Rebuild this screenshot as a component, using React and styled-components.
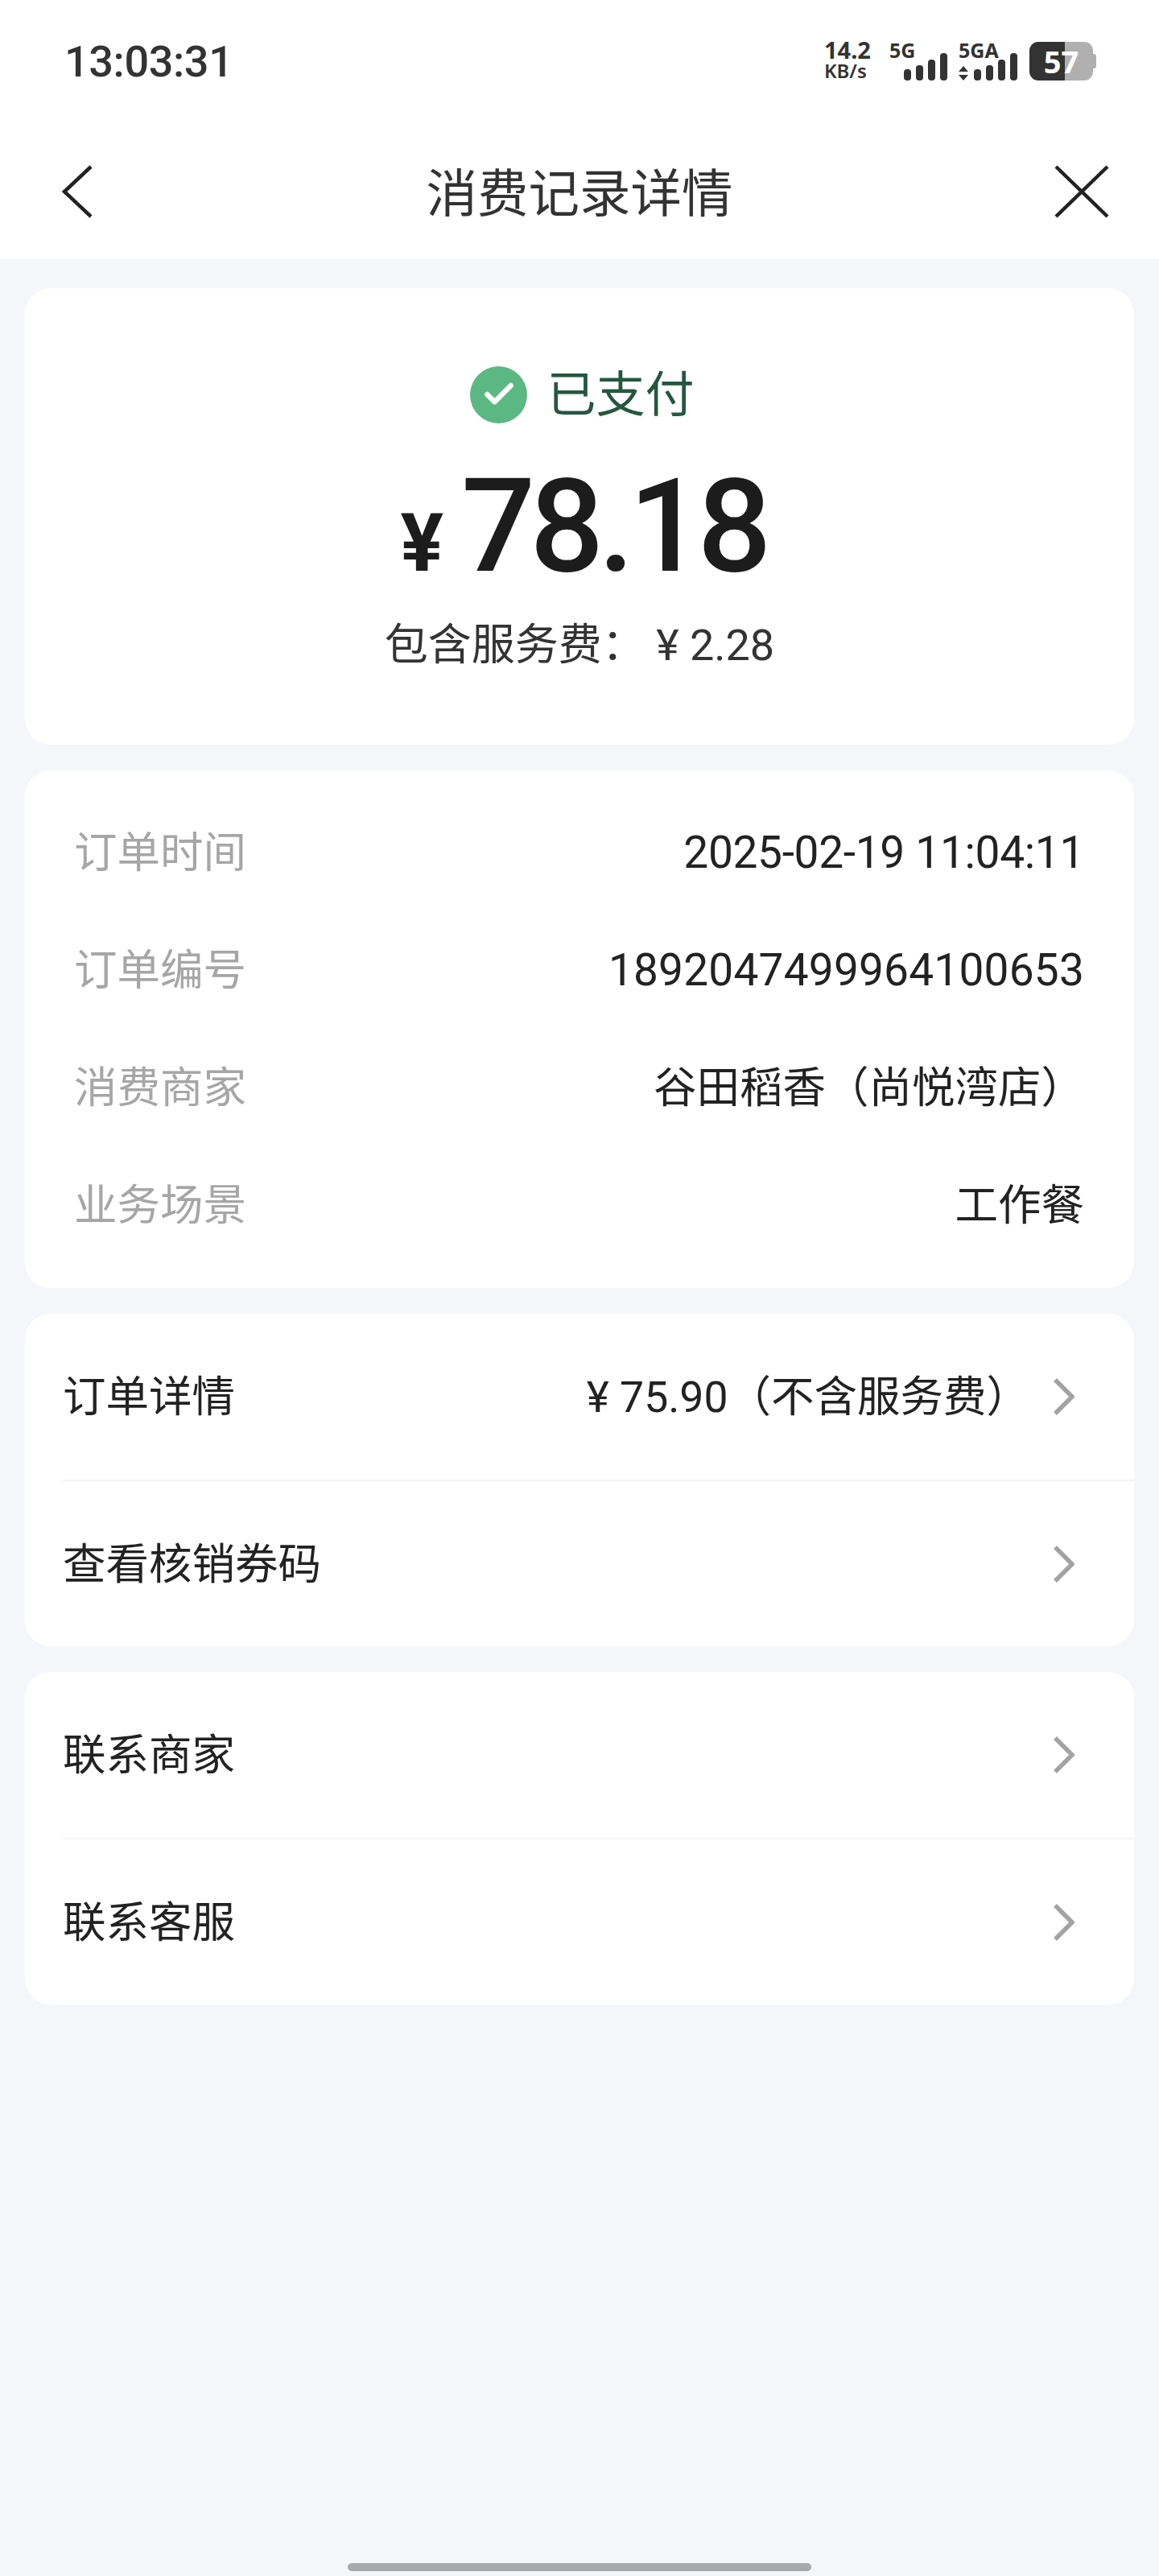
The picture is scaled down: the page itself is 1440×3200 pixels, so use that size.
import React from 'react';
import styled, { createGlobalStyle } from 'styled-components';
import { Check } from 'lucide-react';

const GlobalStyle = createGlobalStyle`
  html, body {
    margin: 0;
    padding: 0;
    background: #f4f6fa;
  }
  body {
    font-family: Roboto, "Noto Sans CJK SC", sans-serif;
  }
`;

const Page = styled.div`
  width: 1440px;
  min-height: 3200px;
  display: flex;
  flex-direction: column;
  background: #f4f6fa;
`;

const Top = styled.div`
  background: #fff;
  height: 322px;
`;

const StatusBar = styled.div`
  height: 154px;
  box-sizing: border-box;
  padding: 0 82px 0 80px;
  display: flex;
  align-items: center;
  justify-content: space-between;
  color: #333;
`;

const Clock = styled.div`
  font-size: 54px;
  font-weight: 500;
  letter-spacing: -0.4px;
  margin-top: -2px;
`;

const Indicators = styled.div`
  display: flex;
  align-items: flex-end;
  height: 48px;
  margin-top: -2px;
`;

const Speed = styled.div`
  width: 81px;
  display: flex;
  flex-direction: column;
  font-family: "Noto Sans", sans-serif;
  font-weight: 700;
`;

const SpeedValue = styled.span`
  font-size: 29px;
  line-height: 28px;
`;

const SpeedUnit = styled.span`
  font-size: 24px;
  line-height: 24px;
  font-weight: 600;
`;

const Signal = styled.div`
  position: relative;
  width: ${p => p.$w}px;
  height: 48px;
  display: flex;
  justify-content: flex-end;
  align-items: flex-end;
`;

const SignalTag = styled.span`
  position: absolute;
  left: ${p => p.$left}px;
  top: -4px;
  font-family: "Noto Sans", sans-serif;
  font-weight: 700;
  font-size: 25px;
  line-height: 28px;
`;

const Battery = styled.div`
  position: relative;
  margin-left: 15px;
  width: 79px;
  height: 48px;
  border-radius: 11px;
  background: linear-gradient(to right, #333 44px, #b0b0b0 44px);
  color: #fff;
  font-family: "Noto Sans", sans-serif;
  font-size: 38px;
  font-weight: 700;
  line-height: 48px;
  text-align: center;
  &::after {
    content: '';
    position: absolute;
    right: -4px;
    top: 15px;
    width: 4px;
    height: 18px;
    border-radius: 0 3px 3px 0;
    background: #b0b0b0;
  }
`;

const NavBar = styled.div`
  height: 168px;
  box-sizing: border-box;
  padding: 0 62px;
  display: grid;
  grid-template-columns: 1fr auto 1fr;
  align-items: center;
`;

const NavSide = styled.div`
  display: flex;
  justify-content: ${p => (p.$end ? 'flex-end' : 'flex-start')};
  padding-left: ${p => (p.$end ? 0 : 14)}px;
`;

const NavTitle = styled.div`
  font-size: 63.5px;
  color: #333;
  line-height: 80px;
  margin-top: 7px;
`;

const Main = styled.main`
  padding: 36px 31px 0;
  display: flex;
  flex-direction: column;
  gap: 32px;
`;

const Card = styled.section`
  background: #fff;
  border-radius: 32px;
  overflow: hidden;
`;

const SummaryCard = styled(Card)`
  height: 567px;
  box-sizing: border-box;
  padding: 96px 0 0 5px;
  display: flex;
  flex-direction: column;
  align-items: center;
`;

const StatusLine = styled.div`
  display: flex;
  align-items: center;
  gap: 24px;
  height: 72px;
  font-size: 61px;
  color: #24573f;
  margin-left: 2px;
`;

const StatusText = styled.span`
  padding-bottom: 9px;
`;

const StatusDot = styled.span`
  width: 71px;
  height: 71px;
  border-radius: 50%;
  background: #5cb882;
  color: #fff;
  display: flex;
  align-items: center;
  justify-content: center;
`;

const Amount = styled.div`
  margin: 38px 0 0 4px;
  height: 180px;
  display: flex;
  align-items: baseline;
  justify-content: center;
  gap: 22px;
  color: #1c1c1c;
  line-height: 180px;
  font-size: 162px;
  font-weight: 500;
  letter-spacing: -7px;
`;

const Currency = styled.span`
  font-size: 100px;
  font-weight: 700;
  letter-spacing: 0;
`;

const Fee = styled.div`
  margin: 28px 0 0 -5px;
  font-size: 54px;
  line-height: 60px;
  color: #333;
`;

const InfoCard = styled(Card)`
  height: 643px;
  box-sizing: border-box;
  padding: 28px 62px 31px 61px;
`;

const InfoRow = styled.div`
  height: 146px;
  display: flex;
  align-items: center;
  justify-content: space-between;
  font-size: 53.5px;
`;

const InfoLabel = styled.span`
  color: #a6a6a6;
  padding-bottom: 7px;
`;

const InfoValue = styled.span`
  color: #222;
  padding-bottom: 7px;
`;

const InfoNumber = styled.span`
  color: #222;
  font-size: 55px;
  letter-spacing: ${p => p.$spacing}px;
  padding-top: 2px;
`;

const LinkRow = styled.div`
  height: 206px;
  margin-left: 47px;
  box-sizing: border-box;
  padding-right: 74px;
  display: flex;
  align-items: center;
  justify-content: space-between;
  font-size: 53.5px;
  color: #222;
  & + & {
    height: 207px;
    border-top: 2px solid #f5f5f7;
  }
`;

const LinkText = styled.span`
  padding-bottom: 9px;
`;

const LinkEnd = styled.div`
  display: flex;
  align-items: center;
  gap: 30px;
`;

const HomeBar = styled.div`
  margin: auto auto 6px;
  width: 576px;
  height: 10px;
  border-radius: 5px;
  background: #a9a9ab;
`;

const Bars = () => (
  <svg width="54" height="34" viewBox="0 0 54 34" fill="#333">
    <rect x="0" y="20" width="9" height="14" rx="4" />
    <rect x="15" y="15" width="9" height="19" rx="4" />
    <rect x="30" y="8" width="9" height="26" rx="4" />
    <rect x="45" y="0" width="9" height="34" rx="4" />
  </svg>
);

const Updown = () => (
  <svg width="14" height="18" viewBox="0 0 14 18" fill="#333" style={{ marginRight: 6 }}>
    <path d="M7 0 L13 7 H1 Z M1 11 H13 L7 18 Z" />
  </svg>
);

const Back = () => (
  <svg width="40" height="66" viewBox="0 0 40 66" fill="none" stroke="#222" strokeWidth="4.5">
    <path d="M37 2 L4 33 L37 64" />
  </svg>
);

const Close = () => (
  <svg width="68" height="66" viewBox="0 0 68 66" fill="none" stroke="#222" strokeWidth="4.5">
    <path d="M2 2 L66 64 M66 2 L2 64" />
  </svg>
);

const Chevron = () => (
  <svg width="26" height="46" viewBox="0 0 26 46" fill="none" stroke="#a3a3a3" strokeWidth="5.5">
    <path d="M2 2 L23 23 L2 44" />
  </svg>
);

const App = () => (
  <Page>
    <GlobalStyle />
    <Top>
      <StatusBar>
        <Clock>13:03:31</Clock>
        <Indicators>
          <Speed>
            <SpeedValue>14.2</SpeedValue>
            <SpeedUnit>KB/s</SpeedUnit>
          </Speed>
          <Signal $w={72}>
            <SignalTag $left={0}>5G</SignalTag>
            <Bars />
          </Signal>
          <Signal $w={87}>
            <SignalTag $left={14}>5GA</SignalTag>
            <Updown />
            <Bars />
          </Signal>
          <Battery>57</Battery>
        </Indicators>
      </StatusBar>
      <NavBar>
        <NavSide><Back /></NavSide>
        <NavTitle>消费记录详情</NavTitle>
        <NavSide $end><Close /></NavSide>
      </NavBar>
    </Top>
    <Main>
      <SummaryCard>
        <StatusLine>
          <StatusDot>
            <Check size={44} strokeWidth={3.5} />
          </StatusDot>
          <StatusText>已支付</StatusText>
        </StatusLine>
        <Amount>
          <Currency>¥</Currency>
          78.18
        </Amount>
        <Fee>包含服务费： ¥ 2.28</Fee>
      </SummaryCard>
      <InfoCard>
        <InfoRow>
          <InfoLabel>订单时间</InfoLabel>
          <InfoNumber $spacing={-0.3}>2025-02-19 11:04:11</InfoNumber>
        </InfoRow>
        <InfoRow>
          <InfoLabel>订单编号</InfoLabel>
          <InfoNumber $spacing={0.2}>1892047499964100653</InfoNumber>
        </InfoRow>
        <InfoRow>
          <InfoLabel>消费商家</InfoLabel>
          <InfoValue>谷田稻香（尚悦湾店）</InfoValue>
        </InfoRow>
        <InfoRow>
          <InfoLabel>业务场景</InfoLabel>
          <InfoValue>工作餐</InfoValue>
        </InfoRow>
      </InfoCard>
      <Card>
        <LinkRow>
          <LinkText>订单详情</LinkText>
          <LinkEnd>
            <LinkText>¥ 75.90（不含服务费）</LinkText>
            <Chevron />
          </LinkEnd>
        </LinkRow>
        <LinkRow>
          <LinkText>查看核销券码</LinkText>
          <LinkEnd>
            <Chevron />
          </LinkEnd>
        </LinkRow>
      </Card>
      <Card>
        <LinkRow>
          <LinkText>联系商家</LinkText>
          <LinkEnd>
            <Chevron />
          </LinkEnd>
        </LinkRow>
        <LinkRow>
          <LinkText>联系客服</LinkText>
          <LinkEnd>
            <Chevron />
          </LinkEnd>
        </LinkRow>
      </Card>
    </Main>
    <HomeBar />
  </Page>
);

export default App;
